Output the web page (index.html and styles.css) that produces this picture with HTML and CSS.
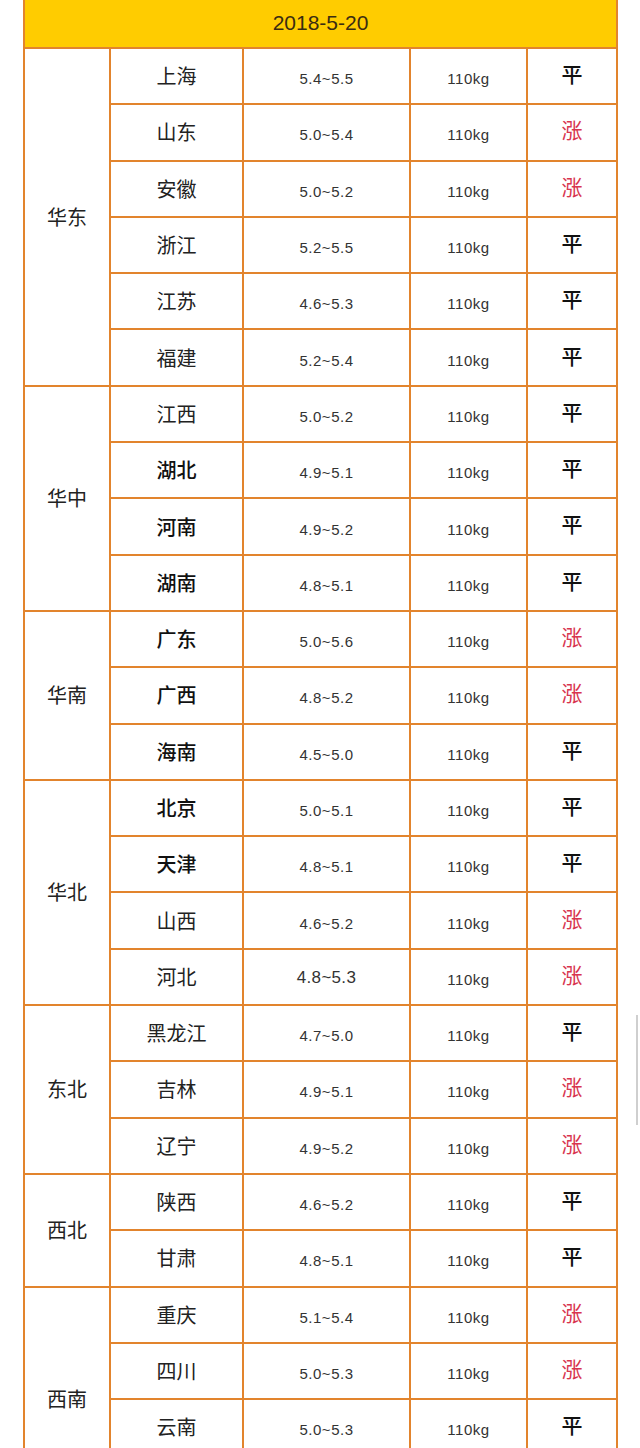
FILE: index.html
```html
<!DOCTYPE html>
<html lang="zh">
<head>
<meta charset="utf-8">
<link rel="stylesheet" href="styles.css">
</head>
<body>
<table class="price-table">
  <colgroup>
    <col class="c-region"><col class="c-prov"><col class="c-price"><col class="c-weight"><col class="c-trend">
  </colgroup>
  <thead>
    <tr><th class="date" colspan="5">2018-5-20</th></tr>
  </thead>
  <tbody>
    <tr><td class="region" rowspan="6">华东</td><td class="prov">上海</td><td class="price">5.4~5.5</td><td class="weight">110kg</td><td class="trend">平</td></tr>
    <tr><td class="prov">山东</td><td class="price">5.0~5.4</td><td class="weight">110kg</td><td class="trend up">涨</td></tr>
    <tr><td class="prov">安徽</td><td class="price">5.0~5.2</td><td class="weight">110kg</td><td class="trend up">涨</td></tr>
    <tr><td class="prov">浙江</td><td class="price">5.2~5.5</td><td class="weight">110kg</td><td class="trend">平</td></tr>
    <tr><td class="prov">江苏</td><td class="price">4.6~5.3</td><td class="weight">110kg</td><td class="trend">平</td></tr>
    <tr><td class="prov">福建</td><td class="price">5.2~5.4</td><td class="weight">110kg</td><td class="trend">平</td></tr>

    <tr><td class="region" rowspan="4">华中</td><td class="prov">江西</td><td class="price">5.0~5.2</td><td class="weight">110kg</td><td class="trend">平</td></tr>
    <tr><td class="prov bold">湖北</td><td class="price">4.9~5.1</td><td class="weight">110kg</td><td class="trend">平</td></tr>
    <tr><td class="prov bold">河南</td><td class="price">4.9~5.2</td><td class="weight">110kg</td><td class="trend">平</td></tr>
    <tr><td class="prov bold">湖南</td><td class="price">4.8~5.1</td><td class="weight">110kg</td><td class="trend">平</td></tr>

    <tr><td class="region" rowspan="3">华南</td><td class="prov bold">广东</td><td class="price">5.0~5.6</td><td class="weight">110kg</td><td class="trend up">涨</td></tr>
    <tr><td class="prov bold">广西</td><td class="price">4.8~5.2</td><td class="weight">110kg</td><td class="trend up">涨</td></tr>
    <tr><td class="prov bold">海南</td><td class="price">4.5~5.0</td><td class="weight">110kg</td><td class="trend">平</td></tr>

    <tr><td class="region" rowspan="4">华北</td><td class="prov bold">北京</td><td class="price">5.0~5.1</td><td class="weight">110kg</td><td class="trend">平</td></tr>
    <tr><td class="prov bold">天津</td><td class="price">4.8~5.1</td><td class="weight">110kg</td><td class="trend">平</td></tr>
    <tr><td class="prov">山西</td><td class="price">4.6~5.2</td><td class="weight">110kg</td><td class="trend up">涨</td></tr>
    <tr><td class="prov">河北</td><td class="price big">4.8~5.3</td><td class="weight">110kg</td><td class="trend up">涨</td></tr>

    <tr><td class="region" rowspan="3">东北</td><td class="prov">黑龙江</td><td class="price">4.7~5.0</td><td class="weight">110kg</td><td class="trend">平</td></tr>
    <tr><td class="prov">吉林</td><td class="price">4.9~5.1</td><td class="weight">110kg</td><td class="trend up">涨</td></tr>
    <tr><td class="prov">辽宁</td><td class="price">4.9~5.2</td><td class="weight">110kg</td><td class="trend up">涨</td></tr>

    <tr><td class="region" rowspan="2">西北</td><td class="prov">陕西</td><td class="price">4.6~5.2</td><td class="weight">110kg</td><td class="trend">平</td></tr>
    <tr><td class="prov">甘肃</td><td class="price">4.8~5.1</td><td class="weight">110kg</td><td class="trend">平</td></tr>

    <tr><td class="region" rowspan="4">西南</td><td class="prov">重庆</td><td class="price">5.1~5.4</td><td class="weight">110kg</td><td class="trend up">涨</td></tr>
    <tr><td class="prov">四川</td><td class="price">5.0~5.3</td><td class="weight">110kg</td><td class="trend up">涨</td></tr>
    <tr><td class="prov">云南</td><td class="price">5.0~5.3</td><td class="weight">110kg</td><td class="trend">平</td></tr>
    <tr><td class="prov"></td><td class="price"></td><td class="weight"></td><td class="trend"></td></tr>
  </tbody>
</table>
<div class="scroll-mark"></div>
</body>
</html>
```

FILE: styles.css
```css
html, body {
  margin: 0;
  padding: 0;
  background: #ffffff;
}
body {
  font-family: "Noto Sans CJK SC", "Liberation Sans", sans-serif;
  color: #222;
}
.price-table {
  border-collapse: collapse;
  table-layout: fixed;
  width: 593px;
  margin-left: 23px;
}
.c-region { width: 86px; }
.c-prov { width: 133px; }
.c-price { width: 167px; }
.c-weight { width: 117px; }
.c-trend { width: 90px; }

.price-table th,
.price-table td {
  border: 2px solid #e2842d;
  text-align: center;
  vertical-align: middle;
  padding: 0;
  line-height: 1.2;
}
.price-table th.date {
  border-top: none;
  background: #ffcc00;
  height: 46px;
  font-family: "Liberation Sans", "Noto Sans", sans-serif;
  font-weight: normal;
  font-size: 21px;
  color: #3a2c12;
  padding-bottom: 1px;
}
.price-table td {
  height: 54.3px;
}
.region {
  font-size: 20px;
  color: #222;
}
.prov {
  font-size: 20px;
  color: #222;
}
.prov.bold {
  font-weight: 500;
  color: #111;
}
.price-table td.price,
.price-table td.weight {
  font-family: "Liberation Sans", Arial, sans-serif;
  font-size: 15px;
  letter-spacing: 0.5px;
  color: #333;
  padding-top: 6px;
  height: 48.3px;
}
.price-table td.price.big {
  font-size: 17px;
  letter-spacing: 0.3px;
  padding-top: 2px;
  height: 52.3px;
}
.price-table td.trend {
  font-size: 21px;
  font-weight: 500;
  color: #111;
  padding-bottom: 5px;
  height: 49.3px;
}
.price-table td.trend.up {
  font-weight: 400;
  color: #d8354f;
}
.scroll-mark {
  position: absolute;
  left: 636px;
  top: 1015px;
  width: 2px;
  height: 110px;
  background: #cfcfcf;
}
```
